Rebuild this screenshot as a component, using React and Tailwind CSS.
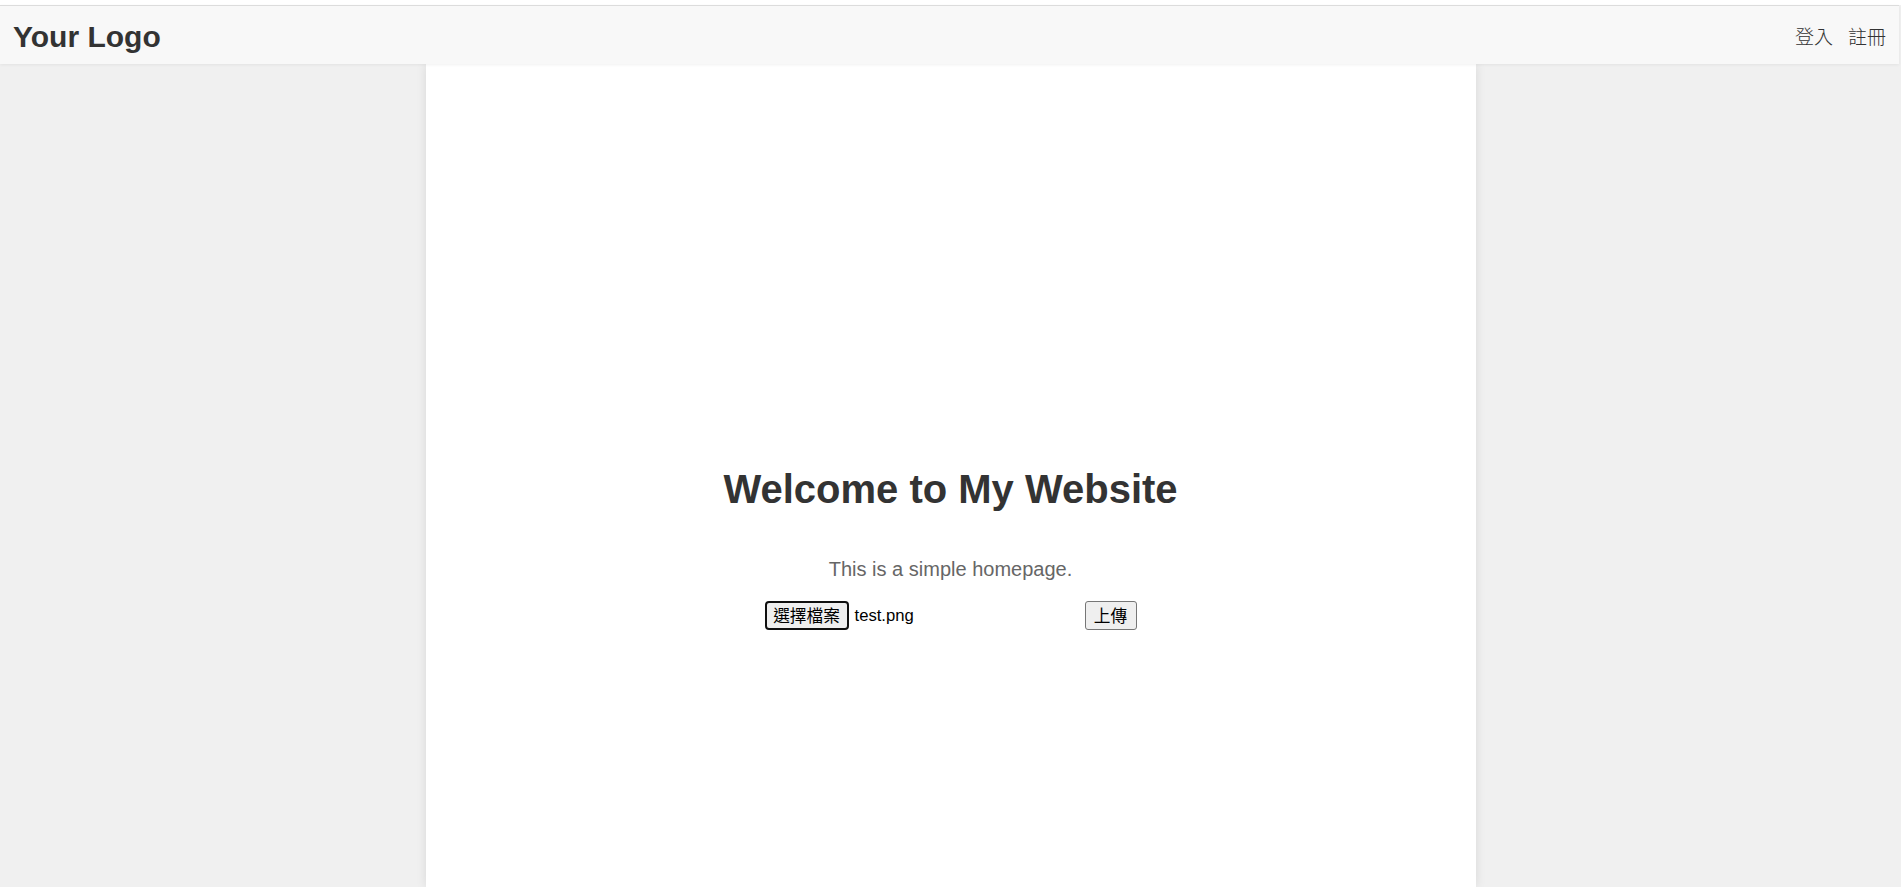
import React from "react";

const sans = "font-['Liberation_Sans','Noto_Sans_CJK_TC',Arial,sans-serif]";

export default function App() {
  return (
    <div className={`h-screen flex flex-col bg-[#f0f0f0] overflow-hidden ${sans}`}>
      {/* top strip */}
      <div className="h-[5px] bg-white shrink-0" />

      {/* Header */}
      <header className="h-[59px] shrink-0 border-t border-[#dcdcdc] bg-[#f8f8f8] flex items-center justify-between pl-[13px] pr-[13px] mr-[2px] relative z-10 shadow-[0_1px_3px_rgba(0,0,0,0.06)]">
        <div className="mt-[3px] text-[30px] font-bold text-[#333] leading-none">Your Logo</div>
        <nav className="mt-[2px] flex items-center text-[19px] text-[#333] font-['Noto_Sans_CJK_TC',sans-serif] font-light">
          <a href="#login">登入</a>
          <a href="#register" className="ml-[15px]">註冊</a>
        </nav>
      </header>

      {/* Main card */}
      <main className="flex-1 w-[1050px] mx-auto bg-white shadow-[0_0_10px_rgba(0,0,0,0.1)] flex flex-col items-center pt-[402px]">
        <h1 className="text-[40px] leading-[46px] font-bold text-[#333]">Welcome to My Website</h1>
        <p className="mt-[46px] text-[20px] leading-[23px] text-[#666]">This is a simple homepage.</p>

        {/* Upload form */}
        <form className="mt-[20px] flex items-start text-[16.67px] text-black">
          <div className="w-[317px] flex items-center">
            <span className="w-[84px] h-[29px] flex items-center justify-center border-2 border-[#101010] rounded-[4px] bg-[#efefef] font-['Noto_Sans_CJK_TC',sans-serif] leading-none">
              選擇檔案
            </span>
            <span className="ml-[6px] font-['Liberation_Sans',Arial,sans-serif]">test.png</span>
          </div>
          <button
            type="button"
            className="ml-[3px] w-[52px] h-[29px] flex items-center justify-center border border-[#767676] rounded-[3px] bg-[#efefef] font-['Noto_Sans_CJK_TC',sans-serif] leading-none"
          >
            上傳
          </button>
        </form>
      </main>
    </div>
  );
}
